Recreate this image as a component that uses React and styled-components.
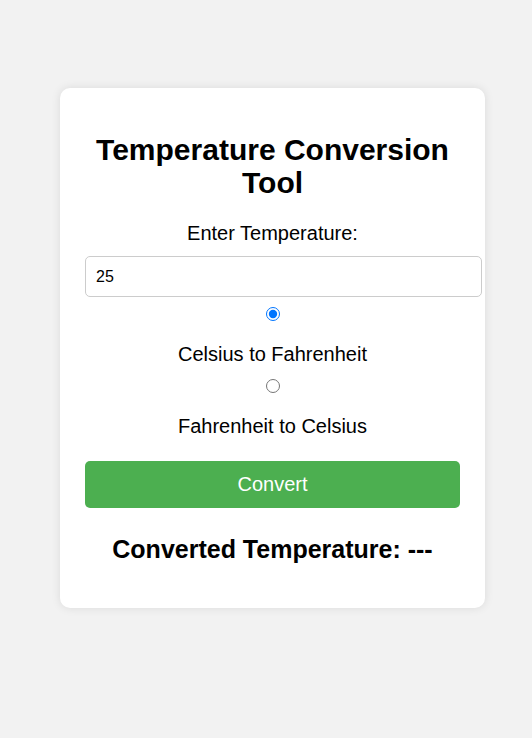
import { useState } from 'react';
import styled, { createGlobalStyle } from 'styled-components';

const GlobalStyle = createGlobalStyle`
  body {
    margin: 0;
    background: #f2f2f2;
    font-family: "Liberation Sans", Arial, sans-serif;
  }
`

function App() {
  const [temp, setTemp] = useState('25');
  const [mode, setMode] = useState('c2f');
  const [result, setResult] = useState('---');

  function convert() {
    const t = parseFloat(temp);
    if (isNaN(t)) {
      setResult('---');
      return;
    }
    if (mode === 'c2f') {
      setResult((t * 9 / 5 + 32).toFixed(2) + ' °F');
    } else {
      setResult(((t - 32) * 5 / 9).toFixed(2) + ' °C');
    }
  }

  return (
    <Page>
      <GlobalStyle />
      <Card>
        <Title>Temperature Conversion Tool</Title>
        <Label htmlFor="temp">Enter Temperature:</Label>
        <Input id="temp" type="number" value={temp} onChange={e => setTemp(e.target.value)} />
        <Radio type="radio" id="c2f" name="mode" checked={mode === 'c2f'} onChange={() => setMode('c2f')} />
        <OptionLabel htmlFor="c2f">Celsius to Fahrenheit</OptionLabel>
        <Radio type="radio" id="f2c" name="mode" checked={mode === 'f2c'} onChange={() => setMode('f2c')} $second />
        <OptionLabel htmlFor="f2c">Fahrenheit to Celsius</OptionLabel>
        <Button onClick={convert}>Convert</Button>
        <Result>Converted Temperature: {result}</Result>
      </Card>
    </Page>
  );
}

const Page = styled.div`
  padding: 88px 0 40px 60px;
`

const Card = styled.div`
  width: 375px;
  padding: 25px;
  background: #fff;
  border-radius: 10px;
  box-shadow: 0 0 10px rgba(0, 0, 0, 0.1);
  display: flex;
  flex-direction: column;
  align-items: center;
  text-align: center;
`

const Title = styled.h1`
  font-size: 30px;
  line-height: 33px;
  margin: 20px 0 23px;
  color: #000;
`

const Label = styled.label`
  display: block;
  font-size: 20px;
  line-height: 23px;
  color: #000;
`

const Input = styled.input`
  align-self: flex-start;
  width: 100%;
  height: 19px;
  margin-top: 11px;
  padding: 10px;
  font-size: 16px;
  font-family: "Liberation Sans", Arial, sans-serif;
  border: 1px solid #ccc;
  border-radius: 5px;
  outline: none;
  -moz-appearance: textfield;
  &::-webkit-outer-spin-button,
  &::-webkit-inner-spin-button {
    -webkit-appearance: none;
    margin: 0;
  }
`

const Radio = styled.input`
  width: 14px;
  height: 14px;
  margin: ${p => (p.$second ? '13px 0 0' : '10px 0 0')};
  accent-color: #0075ff;
`

const OptionLabel = styled.label`
  display: block;
  margin-top: 22px;
  font-size: 20px;
  line-height: 23px;
  color: #000;
`

const Button = styled.button`
  width: 100%;
  margin-top: 23px;
  padding: 12px;
  font-size: 20px;
  line-height: 23px;
  font-family: "Liberation Sans", Arial, sans-serif;
  background: #4caf50;
  color: #fff;
  border: none;
  border-radius: 5px;
  cursor: pointer;
`

const Result = styled.h2`
  font-size: 25px;
  line-height: 28px;
  margin: 27px 0 20px;
  color: #000;
`

export default App;
